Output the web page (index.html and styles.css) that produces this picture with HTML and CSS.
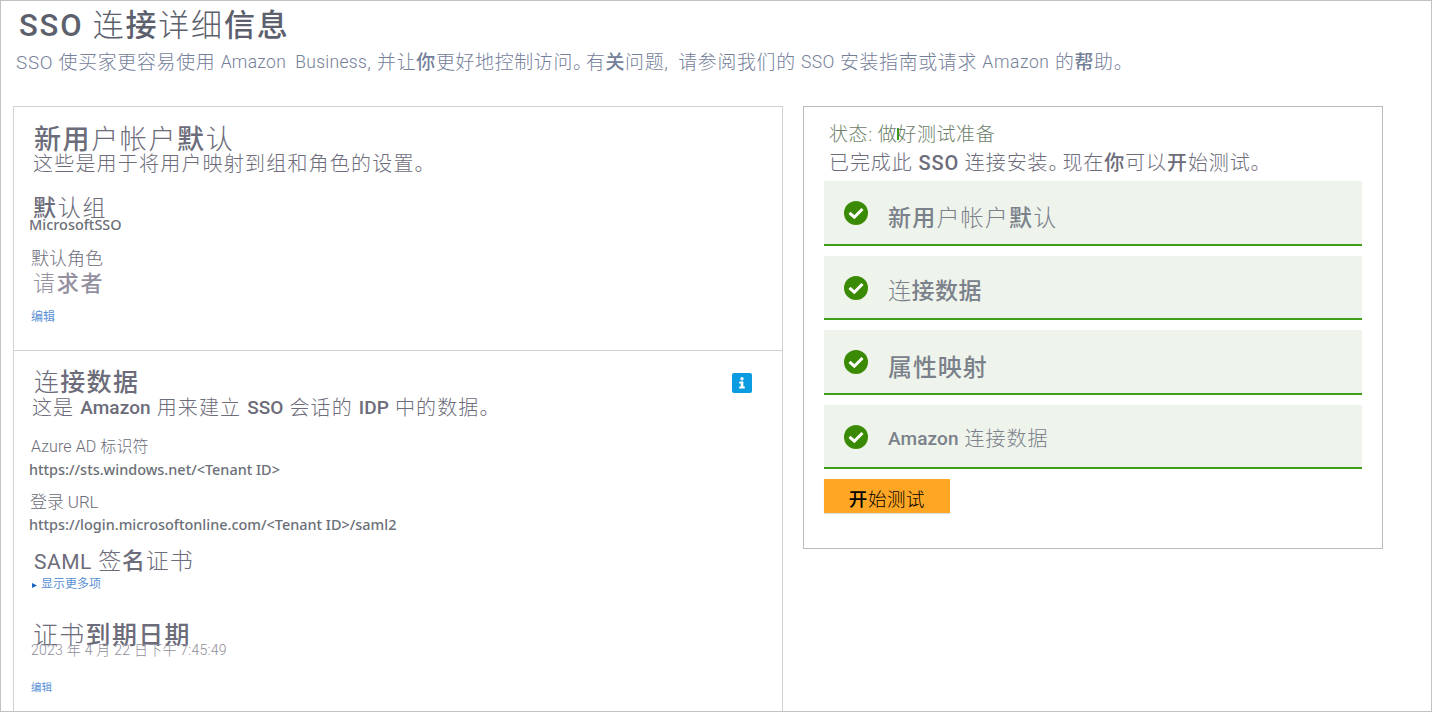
FILE: index.html
```html
<!DOCTYPE html>
<html lang="zh-CN">
<head>
<meta charset="utf-8">
<title>SSO 连接详细信息</title>
<link rel="stylesheet" href="styles.css">
</head>
<body>
<div class="page">
  <header class="header">
    <h1 class="title"><b>SSO</b> 连<b>接</b>详细<b>信息</b></h1>
    <p class="subtitle">SSO 使买家更容易使用 <span class="latin">Amazon&nbsp; Business</span><span class="comma">,</span> 并让<b>你</b>更好地控制访问<span class="tight">。</span>有<b>关</b>问题<span class="comma comma-wide">,</span> 请参阅我们的 <span class="latin">SSO</span> 安装指南或请求 <span class="latin latin-wide">Amazon</span> 的<b>帮</b>助。</p>
  </header>
  <main class="columns">
    <div class="details">
      <section class="section defaults">
        <h2 class="defaults-title"><b>新用</b>户帐户<b>默</b>认</h2>
        <p class="defaults-intro">这些是用于将用户映射到组和角色的设置。</p>
        <h3 class="group-label"><b>默</b>认组</h3>
        <p class="value group-value">MicrosoftSSO</p>
        <h3 class="role-label">默认角色</h3>
        <p class="role-value">请<b>求者</b></p>
        <a class="link edit">编辑</a>
      </section>
      <section class="section connection">
        <div class="connection-head">
          <h2 class="connection-title">连<b>接数据</b></h2>
          <svg class="info" viewBox="0 0 20 20"><rect width="20" height="20" rx="2" fill="#0a9be0"/><circle cx="10" cy="5.7" r="1.7" fill="#fff"/><path d="M7.2 8.6h4.2v5h1.4V15.600H7.200v-2h1.500v-3H7.200z" fill="#fff"/></svg>
        </div>
        <p class="connection-intro">这是 <b>Amazon</b> 用来建立 <b>SSO</b> 会话的 <b>IDP</b> 中的数据。</p>
        <h3 class="id-label">Azure AD 标识符</h3>
        <p class="value id-value">https://sts.windows.net/&lt;Tenant ID&gt;</p>
        <h3 class="url-label">登录 URL</h3>
        <p class="value url-value">https://login.microsoftonline.com/&lt;Tenant ID&gt;/saml2</p>
        <h3 class="cert-title"><span class="saml">SAML</span> 签<b>名</b>证书</h3>
        <a class="link more"><svg class="caret" viewBox="0 0 5 5"><path d="M0 0L5 2.500L0 5z" fill="#1766c2"/></svg>显示更多项</a>
        <h3 class="expiry-title">证书<b>到期日期</b></h3>
        <p class="expiry-value">2023 年 4 月 22 日下午 7:45:49</p>
        <a class="link edit-small">编辑</a>
      </section>
    </div>
    <aside class="status">
      <p class="status-title">状态<span class="colon">:</span>做<span class="mark">好</span>测试准备</p>
      <p class="status-text">已完成此 <b>SSO</b> 连接安装<span class="tight">。</span>现在<b>你</b>可以<b>开</b>始测试。</p>
      <ul class="steps">
        <li class="step step-defaults"><svg class="check" viewBox="0 0 24 24"><circle cx="12" cy="12" r="12" fill="#3b8a05"/><path d="M5.500 11.800l4.800 4.400L18.500 8" fill="none" stroke="#fff" stroke-width="3"/></svg><span class="step-label"><b>新用</b>户帐户<b>默</b>认</span></li>
        <li class="step step-data"><svg class="check" viewBox="0 0 24 24"><circle cx="12" cy="12" r="12" fill="#3b8a05"/><path d="M5.500 11.800l4.800 4.400L18.500 8" fill="none" stroke="#fff" stroke-width="3"/></svg><span class="step-label">连<b>接数据</b></span></li>
        <li class="step step-mapping"><svg class="check" viewBox="0 0 24 24"><circle cx="12" cy="12" r="12" fill="#3b8a05"/><path d="M5.500 11.800l4.800 4.400L18.500 8" fill="none" stroke="#fff" stroke-width="3"/></svg><span class="step-label"><b>属性映射</b></span></li>
        <li class="step step-amazon"><svg class="check" viewBox="0 0 24 24"><circle cx="12" cy="12" r="12" fill="#3b8a05"/><path d="M5.500 11.800l4.800 4.400L18.500 8" fill="none" stroke="#fff" stroke-width="3"/></svg><span class="step-label"><b>Amazon</b> 连接数据</span></li>
      </ul>
      <button class="start"><b>开</b>始测试</button>
    </aside>
  </main>
</div>
</body>
</html>
```
FILE: styles.css
```css
* { box-sizing: border-box; }
body, h1, h2, h3, p, ul { margin: 0; padding: 0; }
body {
  font-family: Roboto, "Noto Sans CJK SC", sans-serif;
  font-weight: 300;
  color: #6c6c7a;
  background: #fff;
}
h1, h2, h3 { font-weight: 300; }
b { font-weight: 500; }
.page {
  height: 712px;
  border: 1px solid #c2c2c2;
  overflow: hidden;
  white-space: nowrap;
}
.header { height: 105px; padding-top: 5px; }
.title { padding-left: 18px; font-size: 31px; line-height: 40px; letter-spacing: 1.800px; color: #5c606c; }
.subtitle { padding-left: 15px; margin-top: 2px; font-size: 18.900px; line-height: 30px; letter-spacing: .7px; color: #74809a; }
.latin { font-size: 17.500px; line-height: 1; letter-spacing: .3px; vertical-align: 1px; }
.latin-wide { letter-spacing: .6px; }
.comma { letter-spacing: 1px; }
.comma-wide { letter-spacing: 5px; }
.tight { letter-spacing: -6px; }
.columns { display: flex; align-items: flex-start; gap: 20px; padding-left: 12px; }
.details { width: 770px; height: 606px; border: 1px solid #d1d1d3; border-bottom: 0; }
.section { display: flex; flex-direction: column; align-items: flex-start; padding-left: 15px; }
.defaults { height: 244px; border-bottom: 1px solid #d1d1d3; padding-top: 18px; }
.defaults-title { padding-left: 5px; font-size: 27px; line-height: 30px; letter-spacing: 1.600px; }
.defaults-intro { padding-left: 4px; margin-top: -3px; font-size: 20px; line-height: 24px; letter-spacing: 1.200px; }
.group-label { padding-left: 4px; margin-top: 19px; font-size: 23px; line-height: 28px; letter-spacing: 1.700px; }
.value { font-family: "Noto Sans", sans-serif; font-weight: 500; font-size: 14.450px; line-height: 20px; color: #6b7077; }
.group-value { margin-top: -8px; }
.role-label { padding-left: 2px; margin-top: 14px; font-size: 18px; line-height: 20px; }
.role-value { padding-left: 4px; margin-top: 2px; font-size: 22px; line-height: 26px; letter-spacing: 1.800px; color: #94909f; }
.link { color: #5b91d4; font-weight: 400; }
.edit { padding-left: 2px; margin-top: 11px; font-size: 12px; line-height: 18px; }
.connection { padding-top: 17px; }
.connection-head { display: flex; justify-content: space-between; align-items: center; width: 723px; height: 30px; }
.connection-title { padding-left: 5px; font-size: 25px; line-height: 30px; letter-spacing: 1.300px; }
.info { width: 20px; height: 20px; }
.connection-intro { padding-left: 3px; margin-top: -2px; font-size: 20px; line-height: 24px; letter-spacing: 1.100px; }
.connection-intro b, .step-amazon b { font-size: 19px; line-height: 1; letter-spacing: .1px; vertical-align: 1px; }
.id-label { padding-left: 2px; margin-top: 17px; font-size: 16px; line-height: 20px; letter-spacing: .1px; }
.id-value { margin-top: 3px; }
.url-label { padding-left: 1px; margin-top: 12px; font-size: 17px; line-height: 20px; letter-spacing: -.1px; }
.url-value { margin-top: 3px; }
.cert-title { padding-left: 5px; margin-top: 13px; font-size: 23px; line-height: 28px; letter-spacing: .8px; }
.saml { font-size: 21px; font-weight: 400; letter-spacing: .5px; }
.more { display: flex; align-items: center; gap: 4px; margin-top: -1px; padding-left: 3px; font-size: 12px; line-height: 18px; }
.caret { width: 5px; height: 5px; margin-top: 3px; }
.expiry-title { padding-left: 4px; margin-top: 28px; font-size: 25px; line-height: 30px; letter-spacing: 1.300px; }
.expiry-value { padding-left: 2px; margin-top: -10px; font-size: 14px; line-height: 18px; letter-spacing: .25px; color: #8f8d99; }
.edit-small { padding-left: 2px; margin-top: 21px; font-size: 10.500px; line-height: 16px; }
.status { width: 580px; height: 443px; border: 1px solid #b9bbbe; padding: 16px 20px 0; }
.status-title { padding-left: 5px; font-size: 19px; line-height: 24px; letter-spacing: .6px; color: #6c8069; }
.colon { letter-spacing: 5.500px; }
.mark { background: linear-gradient(#3b9a14, #3b9a14) 0 5px / 2px 12px no-repeat; }
.status-text { padding-left: 5px; margin-top: 4px; font-size: 20px; line-height: 24px; letter-spacing: .9px; }
.steps { display: flex; flex-direction: column; gap: 10px; margin-top: 6px; list-style: none; }
.step { display: flex; align-items: flex-start; height: 64px; padding: 20px 0 0 20px; background: #eef3ec; border-bottom: 2px solid #3d9e1a; color: #7b818a; }
.check { width: 24px; height: 24px; margin-right: 20px; }
.step-label { line-height: 30px; }
.step-defaults, .step-mapping { height: 65px; }
.step-defaults .step-label { padding-top: 3px; font-size: 23px; letter-spacing: 1.200px; }
.step-data .step-label { padding-top: 1px; font-size: 23px; letter-spacing: .5px; }
.step-mapping .step-label { padding-top: 3px; font-size: 24px; letter-spacing: .9px; }
.step-amazon .step-label { margin-top: -1px; font-size: 20px; letter-spacing: 1px; }
.start { display: block; width: 126px; height: 34px; margin-top: 10px; padding: 8px 0 0; border: 0; background: #ffa724; box-shadow: 0 1px 1px #dfe1e5; color: #000; font: inherit; font-size: 18.500px; line-height: 26px; letter-spacing: .6px; }
```
